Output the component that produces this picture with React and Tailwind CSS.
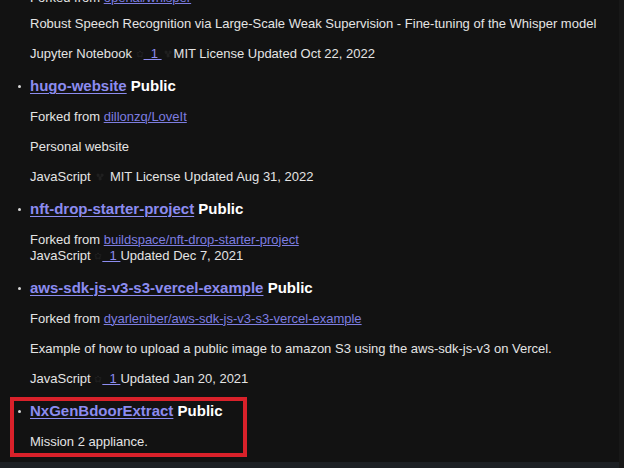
import { Star, GitFork } from 'lucide-react';

const font = { fontFamily: '"Liberation Sans", Arial, sans-serif' };

const Dot = () => (
  <span className="absolute left-[-12px] top-[8px] h-[3px] w-[3px] rounded-full bg-[#d8d8d8]" />
);

const Heading = ({ name, className = 'mt-[15px]' }) => (
  <h3 className={`relative text-[15px] font-bold leading-[18px] ${className}`}>
    <Dot />
    <a className="text-[#8c8cf0] underline decoration-1 underline-offset-2">{name}</a>{' '}
    <span className="text-white">Public</span>
  </h3>
);

const Forked = ({ from, className = 'mt-[14px]' }) => (
  <p className={`leading-[16px] ${className}`}>
    Forked from <a className="text-[#7d7de0] underline decoration-1">{from}</a>
  </p>
);

const Text = ({ children, className = 'mt-[14px]' }) => (
  <p className={`leading-[16px] ${className}`}>{children}</p>
);

const Stars = () => (
  <>
    <Star className="inline-block h-[8px] w-[8px] align-[0px] text-[#2a2a2a]" strokeWidth={2} />
    <a className="text-[#8c8cf0] underline decoration-1">&nbsp;&nbsp;1&nbsp;</a>
  </>
);

const Fork = () => (
  <GitFork className="mx-[2px] inline-block h-[8px] w-[8px] align-[0px] text-[#2a2a2a]" strokeWidth={2} />
);

export default function App() {
  return (
    <div className="relative h-[468px] w-[624px] overflow-hidden bg-[#121212] text-[13px] text-[#e4e4e4]" style={font}>
      <div className="-mt-[10px] pl-[30px]">
        <Forked from="openai/whisper" className="" />
        <Text className="mt-[10px]">
          Robust Speech Recognition via Large-Scale Weak Supervision - Fine-tuning of the Whisper model
        </Text>
        <Text>
          Jupyter Notebook <Stars /><Fork />MIT License Updated Oct 22, 2022
        </Text>

        <Heading name="hugo-website" />
        <Forked from="dillonzq/LoveIt" />
        <Text>Personal website</Text>
        <Text>
          JavaScript <Fork /> MIT License Updated Aug 31, 2022
        </Text>

        <Heading name="nft-drop-starter-project" />
        <Forked from="buildspace/nft-drop-starter-project" />
        <Text className="">
          JavaScript <Stars />Updated Dec 7, 2021
        </Text>

        <Heading name="aws-sdk-js-v3-s3-vercel-example" />
        <Forked from="dyarleniber/aws-sdk-js-v3-s3-vercel-example" />
        <Text>Example of how to upload a public image to amazon S3 using the aws-sdk-js-v3 on Vercel.</Text>
        <Text>
          JavaScript <Stars />Updated Jan 20, 2021
        </Text>

        <Heading name="NxGenBdoorExtract" />
        <Text>Mission 2 appliance.</Text>
      </div>

      {/* annotation box */}
      <div className="absolute left-[10px] top-[397px] h-[60px] w-[237px] border-[4px] border-[#d9212a]" />
      {/* bottom bar and right edge */}
      <div className="absolute bottom-0 left-0 h-[6px] w-full bg-[#1d2024]" />
      <div className="absolute right-0 top-0 h-full w-[5px] bg-[#181818]" />
    </div>
  );
}
